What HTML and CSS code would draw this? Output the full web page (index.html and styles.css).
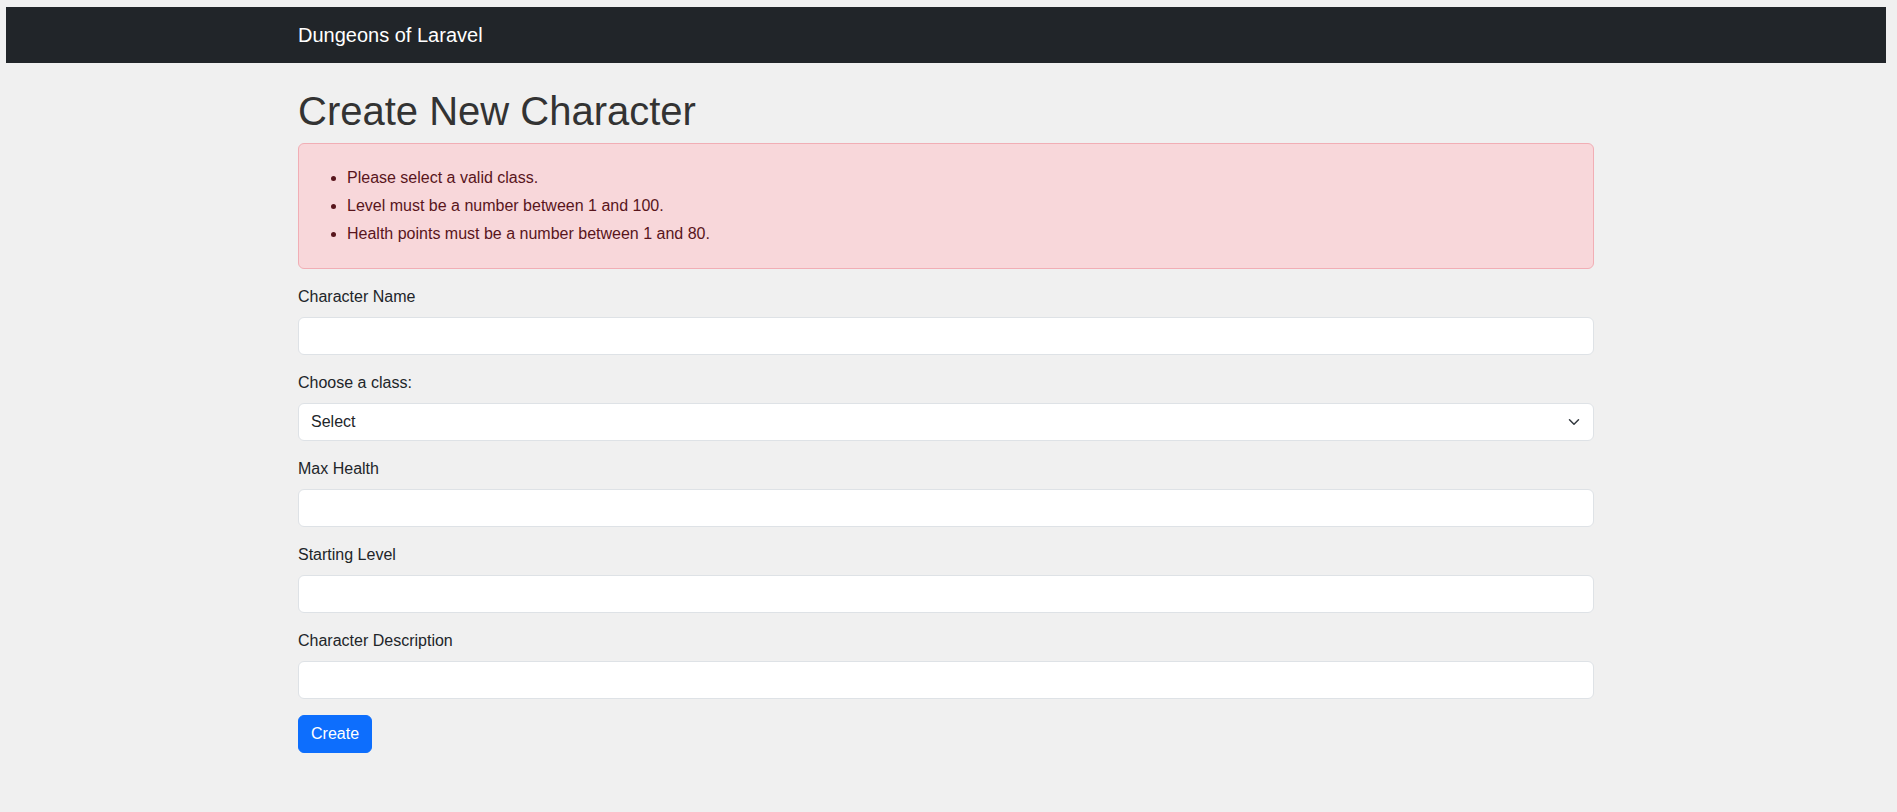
FILE: index.html
```html
<!DOCTYPE html>
<html lang="en">
<head>
<meta charset="utf-8">
<title>Create New Character</title>
<link rel="stylesheet" href="styles.css">
</head>
<body>
<nav class="navbar">
  <div class="container">
    <a class="brand" href="#">Dungeons of Laravel</a>
  </div>
</nav>
<main class="container main">
  <h1 class="title">Create New Character</h1>
  <div class="alert">
    <ul>
      <li>Please select a valid class.</li>
      <li>Level must be a number between 1 and 100.</li>
      <li>Health points must be a number between 1 and 80.</li>
    </ul>
  </div>
  <form class="form">
    <div class="group">
      <label class="label" for="name">Character Name</label>
      <input class="control" id="name" type="text">
    </div>
    <div class="group">
      <label class="label" for="cls">Choose a class:</label>
      <div class="select-wrap">
        <select class="control select" id="cls">
          <option>Select</option>
        </select>
        <svg class="chevron" viewBox="0 0 16 16" width="16" height="12"><path fill="none" stroke="#343a40" stroke-linecap="round" stroke-linejoin="round" stroke-width="2" d="m2 5 6 6 6-6"/></svg>
      </div>
    </div>
    <div class="group">
      <label class="label" for="hp">Max Health</label>
      <input class="control" id="hp" type="text">
    </div>
    <div class="group">
      <label class="label" for="lvl">Starting Level</label>
      <input class="control" id="lvl" type="text">
    </div>
    <div class="group">
      <label class="label" for="desc">Character Description</label>
      <input class="control" id="desc" type="text">
    </div>
    <button class="btn" type="button">Create</button>
  </form>
</main>
</body>
</html>
```
FILE: styles.css
```css
* { box-sizing: border-box; }
html, body { background: #f0f0f0; }
body {
  margin: 7px 11px 0 6px;
  font-family: "Liberation Sans", Arial, sans-serif;
  font-size: 16px;
  line-height: 1.5;
  color: #212529;
}
.container {
  max-width: 1320px;
  margin: 0 auto;
  padding: 0 12px;
}
.navbar {
  background: #212529;
  padding: 8px 0;
}
.brand {
  display: inline-block;
  padding: 5px 0;
  font-size: 20px;
  line-height: 30px;
  color: #fff;
  text-decoration: none;
}
.main { padding-top: 24px; }
.title {
  margin: 0 0 8px;
  font-size: 40px;
  font-weight: 400;
  line-height: 1.2;
  color: #333;
}
.alert {
  background: #f8d7da;
  border: 1px solid #f1aeb5;
  border-radius: 6px;
  color: #58151c;
  padding: 16px;
  margin-bottom: 16px;
}
.alert ul {
  margin: 0;
  padding: 4px 0 4px 32px;
}
.alert li { padding: 2px 0; }
.group { margin-bottom: 16px; }
.label {
  display: inline-block;
  margin-bottom: 8px;
}
.control {
  display: block;
  width: 100%;
  height: 38px;
  padding: 6px 12px;
  font: inherit;
  color: #212529;
  background: #fff;
  border: 1px solid #dee2e6;
  border-radius: 6px;
  outline: none;
}
.select-wrap { position: relative; }
.select {
  appearance: none;
  -webkit-appearance: none;
  padding-right: 36px;
}
.chevron {
  position: absolute;
  right: 12px;
  top: 13px;
  pointer-events: none;
}
.btn {
  display: inline-block;
  font: inherit;
  color: #fff;
  background: #0d6efd;
  border: 1px solid #0d6efd;
  border-radius: 6px;
  padding: 6px 12px;
  line-height: 24px;
}
```
